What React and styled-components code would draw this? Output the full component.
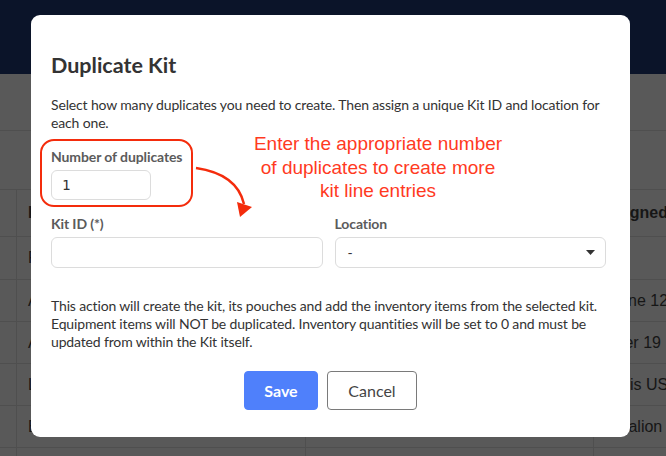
import styled, { createGlobalStyle } from "styled-components"

const Global = createGlobalStyle`
  html, body {
    margin: 0;
    padding: 0;
  }
  #root {
    width: 666px;
    height: 456px;
    overflow: hidden;
    position: relative;
    background: #595959;
  }
`

const Page = styled.div`
  display: flex;
  flex-direction: column;
  height: 456px;
  font-family: "Liberation Sans", Arial, sans-serif;
  color: #161616;
  & > * {
    flex-shrink: 0;
  }
`

const TopBar = styled.div`
  height: 74px;
  background: #0b1429;
`

const Band = styled.div`
  height: ${(p) => p.h}px;
  border-bottom: 1px solid #4f4f4f;
  box-sizing: border-box;
`

const Row = styled.div`
  display: grid;
  grid-template-columns: 16px 289px 288px 1fr;
  height: ${(p) => p.h}px;
  border-bottom: 1px solid #4f4f4f;
  box-sizing: border-box;
  font-size: 16px;
  font-weight: ${(p) => (p.head ? 700 : 400)};
`

const Cell = styled.div`
  display: flex;
  align-items: center;
  padding-left: 11px;
  border-left: 1px solid #4f4f4f;
  white-space: nowrap;
  overflow: hidden;
  & > span {
    margin-left: ${(p) => p.shift || 0}px;
  }
  &:first-child {
    border-left: none;
  }
`

const Modal = styled.div`
  position: absolute;
  left: 31px;
  top: 15px;
  width: 599px;
  height: 422px;
  box-sizing: border-box;
  background: #fff;
  border-radius: 9px;
  padding: 36px 24px 0 20px;
  font-family: Lato, "Open Sans", sans-serif;
  color: #333;
  display: flex;
  flex-direction: column;
`

const Title = styled.h2`
  margin: 0;
  font-size: 21.5px;
  line-height: 28px;
  font-weight: 700;
  color: #333;
`

const Text = styled.p`
  margin: ${(p) => p.mt}px 0 0;
  font-size: 14px;
  line-height: 18px;
  letter-spacing: -0.15px;
  color: #333;
`

const Field = styled.div`
  display: flex;
  flex-direction: column;
  gap: 4px;
  margin-top: ${(p) => p.mt || 0}px;
  width: ${(p) => (p.w ? `${p.w}px` : "auto")};
  flex: ${(p) => (p.w ? "none" : "1")};
`

const Label = styled.label`
  font-size: 14px;
  line-height: 18px;
  font-weight: 700;
  letter-spacing: -0.1px;
  white-space: nowrap;
  color: #5b5b5b;
`

const Input = styled.div`
  height: ${(p) => p.h || 31}px;
  box-sizing: border-box;
  border: 1px solid #dcdcdc;
  border-radius: 6px;
  display: flex;
  align-items: center;
  justify-content: space-between;
  padding: 0 10px 0 ${(p) => p.pl || 10}px;
  font-family: ${(p) => (p.mono ? '"DejaVu Sans Mono", monospace' : "Lato, sans-serif")};
  font-size: 14px;
  color: #333;
`

const Pair = styled.div`
  display: flex;
  gap: 12px;
  margin-top: 15px;
`

const Buttons = styled.div`
  display: flex;
  justify-content: center;
  gap: 9px;
  margin-top: 20px;
  padding-left: 4px;
`

const Button = styled.div`
  height: 39px;
  width: ${(p) => p.w}px;
  box-sizing: border-box;
  border-radius: 4px;
  display: flex;
  align-items: center;
  justify-content: center;
  font-size: 16px;
  background: ${(p) => (p.primary ? "#4f80fb" : "#fff")};
  color: ${(p) => (p.primary ? "#fff" : "#444")};
  border: 1px solid ${(p) => (p.primary ? "#4f80fb" : "#7a7a7a")};
  font-weight: ${(p) => (p.primary ? 700 : 400)};
`

const Highlight = styled.div`
  position: absolute;
  left: 9px;
  top: 124px;
  width: 153px;
  height: 68px;
  box-sizing: border-box;
  border: 2.5px solid #f42c0c;
  border-radius: 14px;
`

const Note = styled.div`
  position: absolute;
  left: 187px;
  top: 117px;
  width: 320px;
  text-align: center;
  font-family: "Liberation Sans", Arial, sans-serif;
  font-size: 19px;
  line-height: 23.5px;
  color: #ff3a1f;
`

const Arrow = styled.svg`
  position: absolute;
  left: 0;
  top: 0;
  overflow: visible;
`

const Caret = () => (
  <svg width="9" height="5" viewBox="0 0 9 5">
    <path d="M0 0h9L4.5 5z" fill="#333" />
  </svg>
)

const rows = [
  ["A", "Engine 12", -9],
  ["A", "Tower 19", -9],
  ["L", "Paris USD", 0],
  ["E", "Battalion", -5],
]

export default function App() {
  return (
    <>
      <Global />
      <Page>
        <TopBar />
        <Band h={57} />
        <Band h={59} />
        <Row h={47} head>
          <Cell />
          <Cell><span>Kit</span></Cell>
          <Cell />
          <Cell shift={-9}><span>Assigned</span></Cell>
        </Row>
        <Row h={43}>
          <Cell />
          <Cell><span>F</span></Cell>
          <Cell />
          <Cell />
        </Row>
        {rows.map((r, i) => (
          <Row h={42} key={i}>
            <Cell />
            <Cell><span>{r[0]}</span></Cell>
            <Cell />
            <Cell shift={r[2]}><span>{r[1]}</span></Cell>
          </Row>
        ))}
        <Row h={42}>
          <Cell />
          <Cell />
          <Cell />
          <Cell />
        </Row>
      </Page>
      <Modal>
        <Title>Duplicate Kit</Title>
        <Text mt={17}>
          Select how many duplicates you need to create. Then assign a unique Kit ID and location for
          each one.
        </Text>
        <Field mt={16} w={100}>
          <Label>Number of duplicates</Label>
          <Input h={30} mono>1</Input>
        </Field>
        <Pair>
          <Field>
            <Label>Kit ID (*)</Label>
            <Input />
          </Field>
          <Field>
            <Label>Location</Label>
            <Input pl={12}>
              <span>-</span>
              <Caret />
            </Input>
          </Field>
        </Pair>
        <Text mt={29}>
          This action will create the kit, its pouches and add the inventory items from the selected kit.
          Equipment items will NOT be duplicated. Inventory quantities will be set to 0 and must be
          updated from within the Kit itself.
        </Text>
        <Buttons>
          <Button primary w={74}>Save</Button>
          <Button w={90}>Cancel</Button>
        </Buttons>
        <Highlight />
        <Note>
          Enter the appropriate number
          <br />
          of duplicates to create more
          <br />
          kit line entries
        </Note>
        <Arrow width="599" height="422">
          <path d="M165 153 Q206 159 213 189" fill="none" stroke="#f42c0c" strokeWidth="2.5" />
          <polygon points="209,202 206,187 221,192" fill="#f42c0c" />
        </Arrow>
      </Modal>
    </>
  )
}
